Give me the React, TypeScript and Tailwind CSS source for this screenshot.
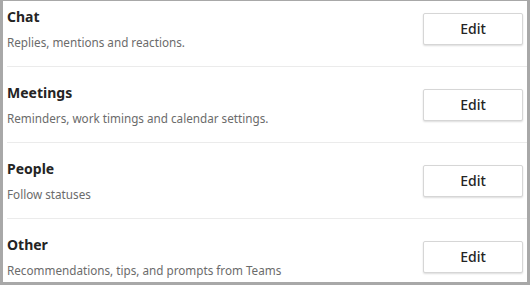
const sections = [
  { title: "Chat", dscr: "Replies, mentions and reactions." },
  { title: "Meetings", dscr: "Reminders, work timings and calendar settings." },
  { title: "People", dscr: "Follow statuses" },
  { title: "Other", dscr: "Recommendations, tips, and prompts from Teams" },
];

export default function App() {
  return (
    <div
      className="w-[530px] h-[285px] bg-white border-[#a8a8a8] border-x-[3px] border-b-[3px] border-t overflow-hidden"
      style={{ fontFamily: '"Noto Sans", "Open Sans", sans-serif' }}
    >
      <div className="flex flex-col pl-[4px] pr-0">
        {sections.map(({ title, dscr }, i) => (
          <div
            key={title}
            className={`flex items-start justify-between pb-[21px] ${i === 0 ? "pt-[12px]" : "pt-[22px]"} ${
              i < sections.length - 1 ? "border-b border-[#ebebeb]" : ""
            }`}
          >
            <div className="flex flex-col h-[32px]">
              <div className="-mt-[4px] text-[14px] font-bold text-[#242424] leading-[16px]">{title}</div>
              <div className="text-[11.7px] text-[#6b6b6b] leading-[16px] mt-[9px] whitespace-nowrap">{dscr}</div>
            </div>
            <button className="w-[100px] h-[32px] mr-[4px] bg-white border border-[#d6d6d6] rounded-[2px] shadow-[0_1px_2px_rgba(0,0,0,0.14)] text-[14px] font-medium text-[#242424] leading-none">
              Edit
            </button>
          </div>
        ))}
      </div>
    </div>
  );
}
